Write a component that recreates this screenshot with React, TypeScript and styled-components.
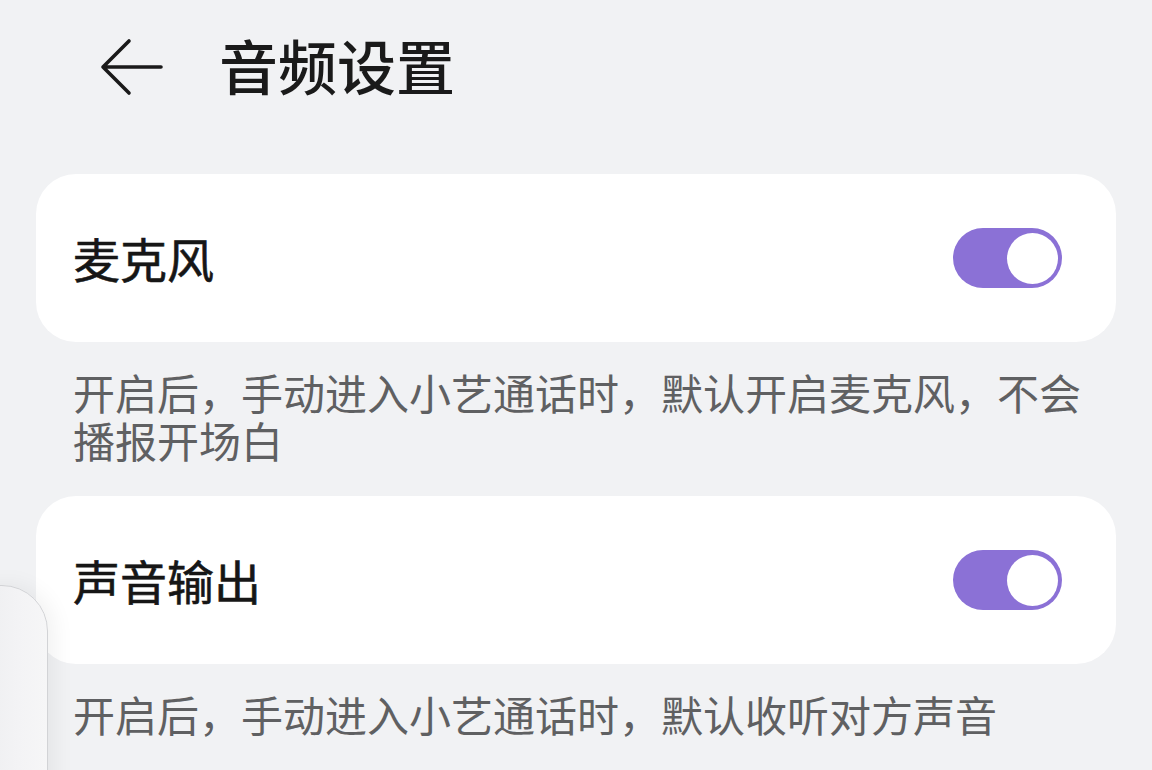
import React from "react";
import styled, { createGlobalStyle } from "styled-components";

const GlobalStyle = createGlobalStyle`
  html, body {
    margin: 0;
    padding: 0;
    background: #f1f2f4;
  }
  body {
    font-family: "Noto Sans CJK SC", "Noto Sans", sans-serif;
    overflow: hidden;
  }
`;

const Page = styled.div`
  position: relative;
  width: 1152px;
  height: 770px;
  background: #f1f2f4;
  overflow: hidden;
`;

const Header = styled.header`
  height: 134px;
  display: flex;
  align-items: center;
  gap: 55px;
  padding-left: 100px;
`;

const BackButton = styled.button`
  width: 64px;
  height: 60px;
  padding: 0;
  border: none;
  background: transparent;
  display: flex;
  align-items: center;
  justify-content: center;
  color: #1a1a1a;
`;

const Title = styled.h1`
  margin: 0;
  padding-bottom: 6px;
  font-size: 59px;
  line-height: 1;
  font-weight: 500;
  color: #1a1a1a;
`;

const Content = styled.main`
  padding: 40px 36px 0 36px;
  display: flex;
  flex-direction: column;
`;

const Card = styled.section`
  height: 168px;
  box-sizing: border-box;
  background: #ffffff;
  border-radius: 40px;
  padding: 0 54px 0 37px;
  display: flex;
  align-items: center;
  justify-content: space-between;
`;

const Label = styled.span`
  font-size: 47px;
  font-weight: 400;
  color: #161616;
  -webkit-text-stroke: 0.6px #161616;
  line-height: 1;
  padding-bottom: 2px;
`;

const Track = styled.div<{ $on: boolean }>`
  position: relative;
  width: 109px;
  height: 60px;
  border-radius: 30px;
  background: ${(p) => (p.$on ? "#8b71d6" : "#d5d6d8")};
  flex-shrink: 0;
`;

const Knob = styled.div<{ $on: boolean }>`
  position: absolute;
  top: 4.5px;
  ${(p) => (p.$on ? "right: 4px;" : "left: 4px;")}
  width: 51px;
  height: 51px;
  border-radius: 50%;
  background: #ffffff;
`;

const Description = styled.p<{ $bottom: number }>`
  margin: 0;
  padding: 26px 20px ${(p) => p.$bottom}px 37px;
  font-size: 42px;
  line-height: 48px;
  color: #5f6062;
  font-weight: 400;
`;

const SidePanel = styled.div`
  position: absolute;
  left: -50px;
  top: 585px;
  width: 96px;
  height: 320px;
  border-radius: 46px;
  border: 1.5px solid #d2d3d6;
  background: linear-gradient(90deg, #e9eaec 0%, #f3f3f5 70%, #f6f6f7 100%);
  box-shadow: 6px 0 22px rgba(0, 0, 0, 0.06);
`;

const Toggle: React.FC<{ on: boolean }> = ({ on }) => (
  <Track $on={on}>
    <Knob $on={on} />
  </Track>
);

const BackArrow = () => (
  <svg width="64" height="60" viewBox="0 0 64 60" fill="none">
    <path
      d="M29 4 L3 30 L29 56 M3 30 L61 30"
      stroke="currentColor"
      strokeWidth="3.6"
      strokeLinecap="round"
      strokeLinejoin="round"
    />
  </svg>
);

export default function App() {
  return (
    <>
      <GlobalStyle />
      <Page>
        <Header>
          <BackButton aria-label="返回">
            <BackArrow />
          </BackButton>
          <Title>音频设置</Title>
        </Header>
        <Content>
          <Card>
            <Label>麦克风</Label>
            <Toggle on />
          </Card>
          <Description $bottom={32}>
            开启后，手动进入小艺通话时，默认开启麦克风，不会播报开场白
          </Description>
          <Card>
            <Label>声音输出</Label>
            <Toggle on />
          </Card>
          <Description $bottom={0}>
            开启后，手动进入小艺通话时，默认收听对方声音
          </Description>
        </Content>
        <SidePanel />
      </Page>
    </>
  );
}
